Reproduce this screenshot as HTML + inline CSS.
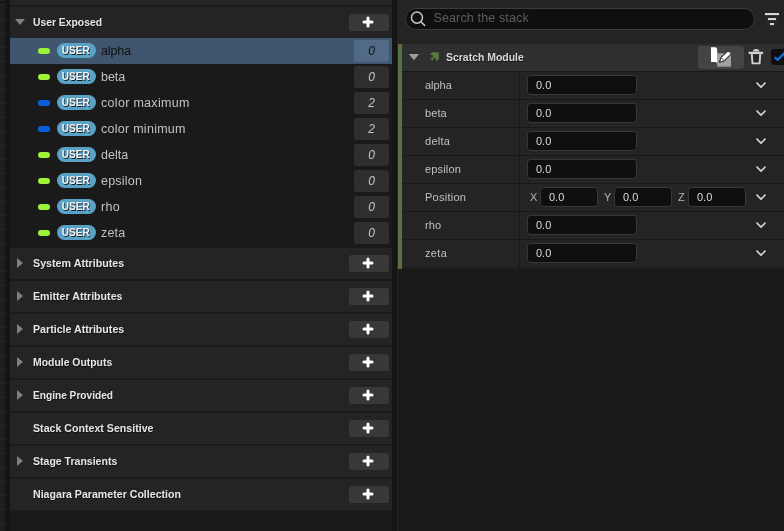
<!DOCTYPE html>
<html>
<head>
<meta charset="utf-8">
<title>Niagara Parameters</title>
<style>
*{box-sizing:border-box;margin:0;padding:0}
html,body{width:784px;height:531px;overflow:hidden;background:#151515;font-family:"Liberation Sans",sans-serif;}
body{position:relative}
.abs{position:absolute}
#wrap{position:absolute;left:0;top:0;width:784px;height:531px;will-change:transform}
/* far-left strip */
#strip{left:0;top:0;width:5px;height:531px;background:#1e1e1e;
  background-image:repeating-linear-gradient(to bottom,transparent 0,transparent 5px,#282828 5px,#282828 6px,transparent 6px,transparent 14px);}
#striptop{left:0;top:2px;width:5px;height:1px;background:#0c0c0c}
#striptop2{left:0;top:4px;width:5px;height:3px;background:#1e1e1e}
/* left panel */
#lp{left:10px;top:0;width:382px;height:531px;background:#1a1a1a}
#lptop{left:0;top:0;width:382px;height:5px;background:#242424}
.hdr{left:0;width:382px;height:31px;background:#242424}
.hdr .t{transform-origin:0 50%;position:absolute;left:23px;top:0;line-height:31px;font-weight:bold;font-size:11.4px;color:#e6e6e6;letter-spacing:-0.7px;white-space:nowrap;text-shadow:0.6px 0.8px 0 rgba(0,0,0,0.55)}
.hdr .tri{position:absolute;left:7px;top:10px;width:0;height:0;border-left:6px solid #808080;border-top:5px solid transparent;border-bottom:5px solid transparent}
.hdr .trid{position:absolute;left:5px;top:12px;width:0;height:0;border-top:6px solid #808080;border-left:5px solid transparent;border-right:5px solid transparent}
.plus{position:absolute;left:339px;top:7px;width:40px;height:17px;border-radius:2.5px;background:#383838}
.plus svg{position:absolute;left:13.4px;top:1.5px}
.row{left:0;width:382px;height:26px}
.row.sel{background:#40566f}
.pill{position:absolute;left:28px;top:9.6px;width:12.2px;height:6.9px;border-radius:3.45px}
.g{background:#9df23a}.b{background:#0a5fd8}
.badge{position:absolute;left:47px;top:5px;width:39px;height:15.3px;border-radius:7.65px;background:#5aa1c6;color:#f4f4f4;font-weight:bold;font-size:11px;line-height:15.3px;text-align:center;text-shadow:1px 1px 0 rgba(0,0,0,0.8)}
.badge span{display:inline-block;transform:translateX(-0.6px) scaleX(0.916)}
.nm{position:absolute;left:91px;top:0.8px;line-height:25px;font-size:12.5px;color:#c2c2c2;white-space:nowrap}
.sel .nm{color:#111}
.vb{position:absolute;left:344px;top:2px;width:35px;height:22px;border-radius:2.5px;background:#2f2f2f;color:#c6c6c6;font-style:italic;font-size:12px;text-align:center;line-height:22px}
.sel .vb{background:#516a85;color:#111}
/* right panel */
#rp{left:397px;top:0;width:387px;height:531px;background:#242424}
#search{left:8px;top:8px;width:350px;height:22px;border-radius:11px;background:#0f0f0f;border:1px solid #3c3c3c}
#search span{position:absolute;left:27.4px;top:0.3px;line-height:18px;font-size:12.5px;letter-spacing:0.15px;color:#5e5e5e;white-space:nowrap}
#mh{left:1px;top:44px;width:386px;height:27px;background:#2e302f}
#green{left:1px;top:44px;width:4px;height:224.7px;background:#597140}
#mh .t{transform-origin:0 50%;position:absolute;left:48px;top:0;line-height:27px;font-weight:bold;font-size:11.4px;color:#d8d8d8;letter-spacing:-0.75px;white-space:nowrap;text-shadow:0.6px 0.8px 0 rgba(0,0,0,0.55)}
.prow{left:5px;width:382px;height:27px;background:#242424}
.prow .l{position:absolute;left:23px;top:0;line-height:27px;font-size:11px;color:#c0c0c0;white-space:nowrap}
.in{position:absolute;top:3px;height:20px;border-radius:3.5px;background:#0f0f0f;border:1px solid #383838;color:#dcdcdc;font-size:11px;line-height:18px;padding-left:8px}
.ax{position:absolute;top:0;line-height:27px;font-size:11px;color:#b4b4b4}
.chev{position:absolute;left:354px;top:9.7px}
.sep{left:5px;width:382px;height:1px;background:#181818}
#coldiv{left:122px;top:72px;width:1px;height:195px;background:#181818}
</style>
</head>
<body>
<div id="wrap">
<div id="strip" class="abs"></div>
<div id="striptop" class="abs"></div><div id="striptop2" class="abs"></div>

<div id="lp" class="abs">
  <div id="lptop" class="abs"></div>
  <div class="hdr abs" style="top:7px"><div class="trid"></div><div class="t" style="letter-spacing:0.0px;transform:scaleX(0.9081)">User Exposed</div><div class="plus"><svg width="12" height="12" viewBox="0 0 12 12"><path d="M6 2V10M2 6H10" stroke="#fff" stroke-width="3" stroke-linecap="round"/></svg></div></div>

  <div class="row abs sel" style="top:38px"><div class="pill g"></div><div class="badge"><span>USER</span></div><div class="nm" style="letter-spacing:-0.123px">alpha</div><div class="vb">0</div></div>
  <div class="row abs" style="top:64px"><div class="pill g"></div><div class="badge"><span>USER</span></div><div class="nm" style="letter-spacing:-0.048px">beta</div><div class="vb">0</div></div>
  <div class="row abs" style="top:90px"><div class="pill b"></div><div class="badge"><span>USER</span></div><div class="nm" style="letter-spacing:0.304px">color maximum</div><div class="vb">2</div></div>
  <div class="row abs" style="top:116px"><div class="pill b"></div><div class="badge"><span>USER</span></div><div class="nm" style="letter-spacing:0.27px">color minimum</div><div class="vb">2</div></div>
  <div class="row abs" style="top:142px"><div class="pill g"></div><div class="badge"><span>USER</span></div><div class="nm" style="letter-spacing:0.023px">delta</div><div class="vb">0</div></div>
  <div class="row abs" style="top:168px"><div class="pill g"></div><div class="badge"><span>USER</span></div><div class="nm" style="letter-spacing:0.212px">epsilon</div><div class="vb">0</div></div>
  <div class="row abs" style="top:194px"><div class="pill g"></div><div class="badge"><span>USER</span></div><div class="nm" style="letter-spacing:0.261px">rho</div><div class="vb">0</div></div>
  <div class="row abs" style="top:220px"><div class="pill g"></div><div class="badge"><span>USER</span></div><div class="nm" style="letter-spacing:0.186px">zeta</div><div class="vb">0</div></div>

  <div class="hdr abs" style="top:248px"><div class="tri"></div><div class="t" style="letter-spacing:0.0px;transform:scaleX(0.9402)">System Attributes</div><div class="plus"><svg width="12" height="12" viewBox="0 0 12 12"><path d="M6 2V10M2 6H10" stroke="#fff" stroke-width="3" stroke-linecap="round"/></svg></div></div>
  <div class="hdr abs" style="top:281px"><div class="tri"></div><div class="t" style="letter-spacing:0.0px;transform:scaleX(0.9345)">Emitter Attributes</div><div class="plus"><svg width="12" height="12" viewBox="0 0 12 12"><path d="M6 2V10M2 6H10" stroke="#fff" stroke-width="3" stroke-linecap="round"/></svg></div></div>
  <div class="hdr abs" style="top:314px"><div class="tri"></div><div class="t" style="letter-spacing:0.0px;transform:scaleX(0.9339)">Particle Attributes</div><div class="plus"><svg width="12" height="12" viewBox="0 0 12 12"><path d="M6 2V10M2 6H10" stroke="#fff" stroke-width="3" stroke-linecap="round"/></svg></div></div>
  <div class="hdr abs" style="top:347px"><div class="tri"></div><div class="t" style="letter-spacing:0.0px;transform:scaleX(0.9142)">Module Outputs</div><div class="plus"><svg width="12" height="12" viewBox="0 0 12 12"><path d="M6 2V10M2 6H10" stroke="#fff" stroke-width="3" stroke-linecap="round"/></svg></div></div>
  <div class="hdr abs" style="top:380px"><div class="tri"></div><div class="t" style="letter-spacing:0.0px;transform:scaleX(0.8902)">Engine Provided</div><div class="plus"><svg width="12" height="12" viewBox="0 0 12 12"><path d="M6 2V10M2 6H10" stroke="#fff" stroke-width="3" stroke-linecap="round"/></svg></div></div>
  <div class="hdr abs" style="top:413px"><div class="t" style="letter-spacing:0.0px;transform:scaleX(0.9331)">Stack Context Sensitive</div><div class="plus"><svg width="12" height="12" viewBox="0 0 12 12"><path d="M6 2V10M2 6H10" stroke="#fff" stroke-width="3" stroke-linecap="round"/></svg></div></div>
  <div class="hdr abs" style="top:446px"><div class="tri"></div><div class="t" style="letter-spacing:0.0px;transform:scaleX(0.9241)">Stage Transients</div><div class="plus"><svg width="12" height="12" viewBox="0 0 12 12"><path d="M6 2V10M2 6H10" stroke="#fff" stroke-width="3" stroke-linecap="round"/></svg></div></div>
  <div class="hdr abs" style="top:479px"><div class="t" style="letter-spacing:0.0px;transform:scaleX(0.9314)">Niagara Parameter Collection</div><div class="plus"><svg width="12" height="12" viewBox="0 0 12 12"><path d="M6 2V10M2 6H10" stroke="#fff" stroke-width="3" stroke-linecap="round"/></svg></div></div>
</div>

<div id="rp" class="abs">
  <div class="abs" style="left:1px;top:269px;width:386px;height:262px;background:#1a1a1a"></div>
  <div id="search" class="abs">
    <svg class="abs" style="left:0;top:0" width="22" height="20" viewBox="0 0 22 20"><circle cx="10.95" cy="8.6" r="5.55" fill="none" stroke="#c8c8c8" stroke-width="1.5"/><path d="M14.9 12.7L18.6 16.4" stroke="#c8c8c8" stroke-width="1.5" stroke-linecap="round"/></svg>
    <span>Search the stack</span>
  </div>
  <svg class="abs" style="left:367px;top:12px" width="16" height="14" viewBox="0 0 16 14"><rect x="0.9" y="1" width="14.2" height="2.1" fill="#d6d6d6"/><rect x="3.9" y="6" width="8.2" height="2.1" fill="#d6d6d6"/><rect x="5.9" y="11" width="4.2" height="2.1" fill="#d6d6d6"/></svg>

  <div id="mh" class="abs">
    <svg class="abs" style="left:10px;top:9px" width="12" height="8" viewBox="0 0 12 8"><path d="M0.7 0.9H11.2L5.95 7.3Z" fill="#9c9c9c"/></svg>
    <svg class="abs" style="left:31px;top:7px" width="11" height="12" viewBox="0 0 11 12">
      <path d="M1 3.7L3.3 1.3H9.7V8L7.3 10.3L6.6 6.4L4.6 4.4Z" fill="#5c7a39"/>
      <path d="M5.9 5.1L1.9 9.1" stroke="#5c7a39" stroke-width="2.8" stroke-dasharray="1.9 0.6"/>
    </svg>
    <div class="t" style="letter-spacing:0.0px;transform:scaleX(0.9174)">Scratch Module</div>
    <div class="abs" style="left:300px;top:2px;width:46px;height:23px;border-radius:3px;background:#444"></div>
    <svg class="abs" style="left:311px;top:3px" width="24" height="21" viewBox="0 0 24 21">
      <rect x="8.2" y="6.3" width="13.8" height="13.4" fill="#a0a0a0"/>
      <path d="M2 0.3H6.2Q8.2 0.5 8.2 2.8V16.7Q8 15 6 15H2Z" fill="#fff"/>
      <path d="M10.4 15.5L12 10.7L19.3 3.4L22.5 6.6L15.2 13.9Z" fill="#fff" stroke="#3c3c3c" stroke-width="1.2" stroke-linejoin="round"/>
      <path d="M12.2 10.7L15.2 13.7" stroke="#3c3c3c" stroke-width="0.9"/>
    </svg>
    <svg class="abs" style="left:350px;top:4px" width="16" height="18" viewBox="0 0 16 18">
      <path d="M3.8 6.1L4.5 15.35H11.6L12.2 6.1" fill="#262626" stroke="#d2d2d2" stroke-width="1.9" stroke-linejoin="round"/>
      <rect x="0.7" y="3.8" width="14.4" height="2.3" fill="#d2d2d2"/>
      <path d="M4.9 3.4A3.2 2.5 0 0 1 11.3 3.4Z" fill="#d2d2d2"/>
    </svg>
    <div class="abs" style="left:373px;top:5px;width:16px;height:16px;border-radius:3px;background:#0f0f0f"></div>
    <svg class="abs" style="left:376px;top:7px" width="12" height="12" viewBox="0 0 12 12"><path d="M1.5 6.8L3.7 8.8L12 0.5" fill="none" stroke="#0d70e4" stroke-width="2.3" stroke-linecap="round" stroke-linejoin="round"/></svg>
  </div>
  <div class="abs" style="left:5px;top:71px;width:382px;height:1px;background:#181818"></div>

  <div class="prow abs" style="top:72px"><div class="l" style="letter-spacing:-0.03px">alpha</div><div class="in" style="left:125px;width:110px">0.0</div><svg class="chev" width="10" height="7" viewBox="0 0 10 7"><path d="M1 1.1L5 5.1L9 1.1" fill="none" stroke="#d0d0d0" stroke-width="1.7" stroke-linecap="round" stroke-linejoin="round"/></svg></div>
  <div class="sep abs" style="top:99px"></div>
  <div class="prow abs" style="top:100px"><div class="l" style="letter-spacing:0.093px">beta</div><div class="in" style="left:125px;width:110px">0.0</div><svg class="chev" width="10" height="7" viewBox="0 0 10 7"><path d="M1 1.1L5 5.1L9 1.1" fill="none" stroke="#d0d0d0" stroke-width="1.7" stroke-linecap="round" stroke-linejoin="round"/></svg></div>
  <div class="sep abs" style="top:127px"></div>
  <div class="prow abs" style="top:128px"><div class="l" style="letter-spacing:0.26px">delta</div><div class="in" style="left:125px;width:110px">0.0</div><svg class="chev" width="10" height="7" viewBox="0 0 10 7"><path d="M1 1.1L5 5.1L9 1.1" fill="none" stroke="#d0d0d0" stroke-width="1.7" stroke-linecap="round" stroke-linejoin="round"/></svg></div>
  <div class="sep abs" style="top:155px"></div>
  <div class="prow abs" style="top:156px"><div class="l" style="letter-spacing:0.173px">epsilon</div><div class="in" style="left:125px;width:110px">0.0</div><svg class="chev" width="10" height="7" viewBox="0 0 10 7"><path d="M1 1.1L5 5.1L9 1.1" fill="none" stroke="#d0d0d0" stroke-width="1.7" stroke-linecap="round" stroke-linejoin="round"/></svg></div>
  <div class="sep abs" style="top:183px"></div>
  <div class="prow abs" style="top:184px"><div class="l" style="letter-spacing:0.251px">Position</div>
    <div class="ax" style="left:128px">X</div><div class="in" style="left:138px;width:58px">0.0</div>
    <div class="ax" style="left:202px">Y</div><div class="in" style="left:212px;width:58px">0.0</div>
    <div class="ax" style="left:276px">Z</div><div class="in" style="left:286px;width:58px">0.0</div>
    <svg class="chev" width="10" height="7" viewBox="0 0 10 7"><path d="M1 1.1L5 5.1L9 1.1" fill="none" stroke="#d0d0d0" stroke-width="1.7" stroke-linecap="round" stroke-linejoin="round"/></svg></div>
  <div class="sep abs" style="top:211px"></div>
  <div class="prow abs" style="top:212px"><div class="l" style="letter-spacing:0.147px">rho</div><div class="in" style="left:125px;width:110px">0.0</div><svg class="chev" width="10" height="7" viewBox="0 0 10 7"><path d="M1 1.1L5 5.1L9 1.1" fill="none" stroke="#d0d0d0" stroke-width="1.7" stroke-linecap="round" stroke-linejoin="round"/></svg></div>
  <div class="sep abs" style="top:239px"></div>
  <div class="prow abs" style="top:240px"><div class="l" style="letter-spacing:0.368px">zeta</div><div class="in" style="left:125px;width:110px">0.0</div><svg class="chev" width="10" height="7" viewBox="0 0 10 7"><path d="M1 1.1L5 5.1L9 1.1" fill="none" stroke="#d0d0d0" stroke-width="1.7" stroke-linecap="round" stroke-linejoin="round"/></svg></div>
  <div class="sep abs" style="top:267px;height:1.7px;background:#1e1e1e"></div>
  <div id="coldiv" class="abs"></div>
  <div id="green" class="abs"></div>
</div>
</div>
</body>
</html>
